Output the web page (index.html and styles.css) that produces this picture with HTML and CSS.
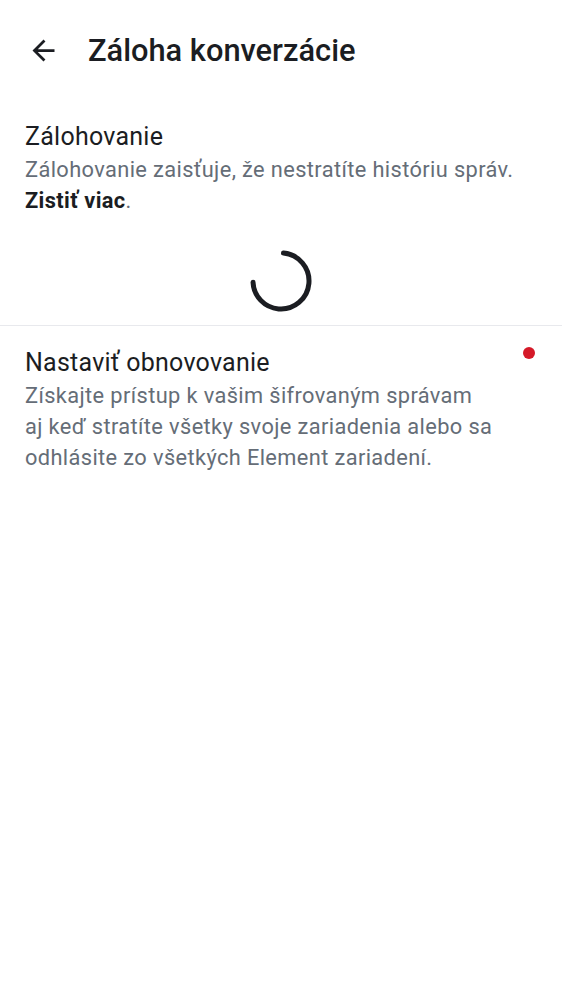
FILE: index.html
```html
<!DOCTYPE html>
<html lang="sk">
<head>
<meta charset="utf-8">
<link rel="stylesheet" href="styles.css">
</head>
<body>
<header class="topbar">
  <button class="back" aria-label="Späť">
    <svg width="33" height="33" viewBox="0 0 24 24"><path d="M20 11H7.83l5.59-5.59L12 4l-8 8 8 8 1.41-1.41L7.83 13H20v-2z" fill="#1b1d22"/></svg>
  </button>
  <h1 class="title">Záloha konverzácie</h1>
</header>
<section class="item">
  <div class="item-title">Zálohovanie</div>
  <div class="item-sub">Zálohovanie zaisťuje, že nestratíte históriu správ. <b class="link">Zistiť viac</b>.</div>
</section>
<div class="spinner-row">
  <svg class="spinner" width="64" height="64" viewBox="0 0 64 64"><circle cx="32" cy="32" r="28" fill="none" stroke="#1b1d22" stroke-width="5" stroke-linecap="round" stroke-dasharray="128 200" transform="rotate(-85 32 32)"/></svg>
</div>
<hr class="divider">
<section class="item item-row">
  <div class="item-text">
    <div class="item-title">Nastaviť obnovovanie</div>
    <div class="item-sub">Získajte prístup k vašim šifrovaným správam aj keď stratíte všetky svoje zariadenia alebo sa odhlásite zo všetkých Element zariadení.</div>
  </div>
  <span class="dot"></span>
</section>
</body>
</html>
```
FILE: styles.css
```css
html, body { margin: 0; padding: 0; background: #fff; }
body { font-family: Roboto, "Noto Sans", sans-serif; color: #1b1d22; width: 562px; }
.topbar { display: flex; align-items: center; height: 100px; padding-left: 27px; }
.back { border: 0; background: none; padding: 0; width: 33px; height: 33px; display: flex; }
.title { margin: 0 0 0 28px; font-size: 30.8px; font-weight: 500; }
.item { padding: 20px 25px 0 25px; }
.item-title { font-size: 25px; line-height: 34px; color: #1b1d22; letter-spacing: 0.25px; }
.item-sub { font-size: 21.8px; line-height: 31px; color: #656d77; letter-spacing: 0.38px; }
.link { color: #1b1d22; font-weight: 700; }
.spinner-row { display: flex; justify-content: center; padding: 33px 0 12px; }
.divider { border: 0; border-top: 1px solid #e8e9ed; margin: 0; }
.item-row { display: flex; padding-right: 27px; }
.item-text { flex: 1; padding-right: 29px; }
.dot { width: 12px; height: 12px; border-radius: 50%; background: #d51928; margin-top: 1px; flex: none; }
```
